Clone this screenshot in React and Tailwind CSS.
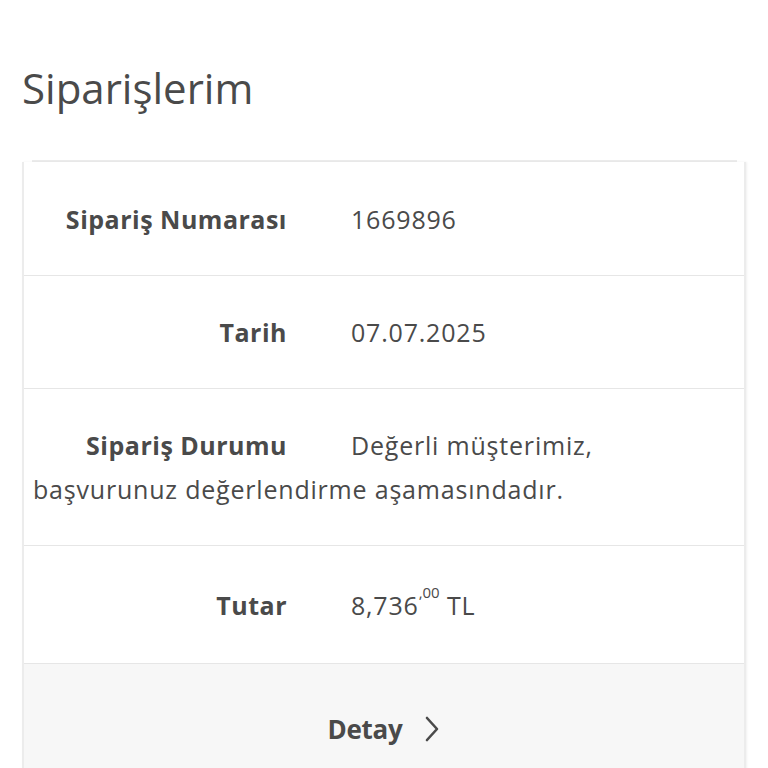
import React from "react";

const font = { fontFamily: "'Open Sans', Lato, sans-serif" };

function Row({ label, children, cls = "py-[34px]" }) {
  return (
    <div className={"border-b border-[#e6e6e6] pl-[9px] pr-[30px] text-[25px] leading-[44px] tracking-[0.8px] text-[#4a4a4a] " + cls}>
      <span className="inline-block w-[254px] text-right font-bold mr-[64px] text-[25px] tracking-[0.5px]">{label}</span>
      {children}
    </div>
  );
}

export default function App() {
  return (
    <div className="w-[768px] h-[768px] overflow-hidden bg-white" style={font}>
      <h1 className="pl-[22px] pt-[62px] text-[42px] leading-[52px] text-[#4a4a4a] font-normal">Siparişlerim</h1>
      <div className="mt-[46px] mx-[32px] w-[705px] h-[2px] bg-[#ececec]" />
      <div className="ml-[22px] w-[724px] border-l-2 border-r-2 border-[#ececec] shadow-[1px_0_2px_rgba(0,0,0,0.06)]">
        <Row label="Sipariş Numarası" cls="pt-[35px] pb-[34px]">1669896</Row>
        <Row label="Tarih">07.07.2025</Row>
        <Row label="Sipariş Durumu">Değerli müşterimiz, başvurunuz değerlendirme aşamasındadır.</Row>
        <Row label="Tutar" cls="pt-[37px] pb-[36px]">
          8,736<sup className="text-[15px] align-[10px] leading-none tracking-normal">,00</sup> TL
        </Row>
        <div className="bg-[#f7f7f7] h-[120px] flex items-start justify-center pt-[48px] gap-[22px] text-[#4a4a4a]">
          <span className="text-[26px] font-bold leading-[34px] tracking-[-0.3px]">Detay</span>
          <svg width="16" height="26" viewBox="0 0 16 26" className="mt-[4px]">
            <path d="M3 2 L13 13 L3 24" fill="none" stroke="#4a4a4a" strokeWidth="2.6" strokeLinecap="round" strokeLinejoin="round" />
          </svg>
        </div>
      </div>
    </div>
  );
}
